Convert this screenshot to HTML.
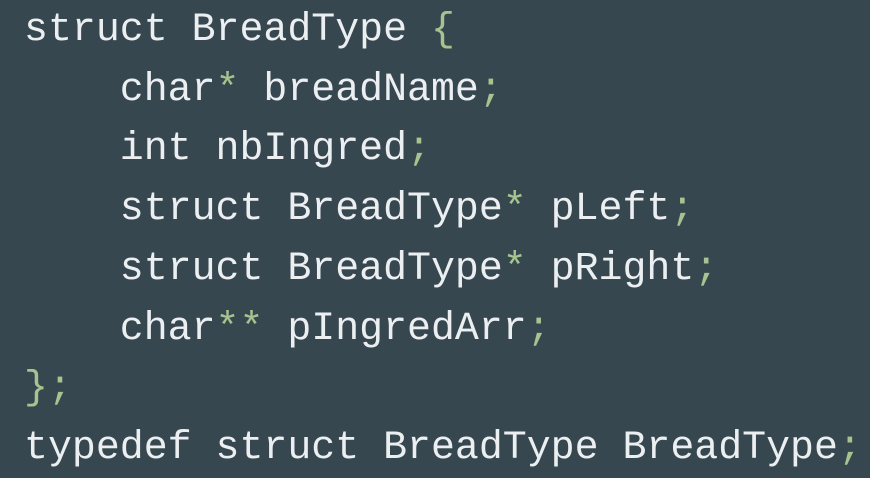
<!DOCTYPE html>
<html><head><style>
html,body{margin:0;padding:0;}
body{width:870px;height:478px;background:#37474f;overflow:hidden;}
pre{margin:0;position:absolute;left:24px;top:0;font-family:"Liberation Mono",monospace;font-size:39.9px;line-height:59.7px;color:#eceff1;}
.g{color:#a5c48f;}
</style></head><body>
<pre>struct BreadType <span class="g">{</span>
    char<span class="g">*</span> breadName<span class="g">;</span>
    int nbIngred<span class="g">;</span>
    struct BreadType<span class="g">*</span> pLeft<span class="g">;</span>
    struct BreadType<span class="g">*</span> pRight<span class="g">;</span>
    char<span class="g">**</span> pIngredArr<span class="g">;</span>
<span class="g">};</span>
typedef struct BreadType BreadType<span class="g">;</span></pre>
</body></html>
